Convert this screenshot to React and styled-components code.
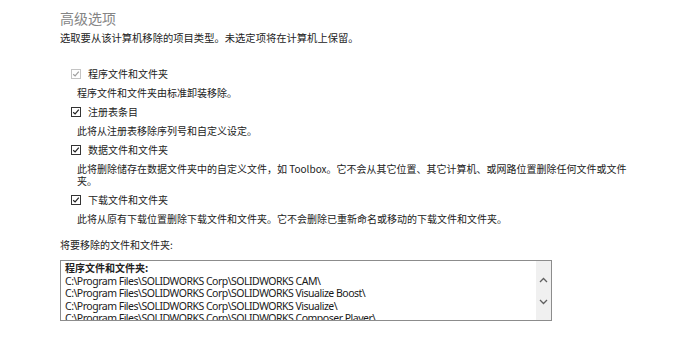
import React from 'react'
import styled, { createGlobalStyle } from 'styled-components'

const GlobalStyle = createGlobalStyle`
  html, body {
    margin: 0;
    padding: 0;
    background: #ffffff;
  }
  body {
    font-family: "Noto Sans CJK SC", "Noto Sans", sans-serif;
    color: #222222;
  }
`

const Page = styled.div`
  width: 683px;
  height: 361px;
  overflow: hidden;
  box-sizing: border-box;
  padding: 10px 0 0 60px;
`

const Title = styled.h1`
  margin: 0;
  font-size: 14px;
  line-height: 16px;
  font-weight: 400;
  color: #858585;
`

const Intro = styled.p`
  margin: 6px 0 0;
  font-size: 10.3px;
  line-height: 12px;
`

const OptionList = styled.div`
  margin-top: 23.5px;
  padding-left: 11px;
  display: flex;
  flex-direction: column;
  row-gap: 7px;
`

const Option = styled.div`
  display: flex;
  flex-direction: column;
  row-gap: 7px;
`

const Row = styled.label`
  display: flex;
  align-items: center;
  column-gap: 7px;
  font-size: 10px;
  line-height: 12px;
`

const Box = styled.span`
  width: 10px;
  height: 10px;
  box-sizing: border-box;
  border: 1px solid ${p => (p.$disabled ? '#c4c4c4' : '#333333')};
  background: #ffffff;
  display: flex;
  align-items: center;
  justify-content: center;

  svg {
    display: block;
  }
`

const Desc = styled.div`
  padding-left: 6px;
  width: 560px;
  font-size: 10px;
  line-height: 12px;
`

const ListLabel = styled.div`
  margin-top: 14.5px;
  font-size: 10px;
  line-height: 12px;
`

const ListBox = styled.div`
  margin-top: 9px;
  width: 492px;
  height: 61px;
  box-sizing: border-box;
  border: 1px solid #8c8c8c;
  display: flex;
  overflow: hidden;
`

const ListBody = styled.div`
  flex: 1;
  padding: 1px 0 0 4px;
  overflow: hidden;
`

const ListHead = styled.div`
  font-size: 10px;
  line-height: 12.5px;
  font-weight: 700;
`

const PathLine = styled.div`
  font-family: "Noto Sans", sans-serif;
  font-size: 10.5px;
  letter-spacing: -0.5px;
  line-height: 12.5px;
  white-space: nowrap;
  color: #1a1a1a;
`

const ScrollBar = styled.div`
  width: 15px;
  background: #f0f0f0;
  display: flex;
  flex-direction: column;
  align-items: center;
  padding-top: 16px;
  row-gap: 16px;
`

function Check({ disabled }) {
  return (
    <Box $disabled={disabled}>
      <svg width="8" height="8" viewBox="0 0 8 8">
        <path
          d="M1.2 4.2 L3.1 6 L6.8 1.6"
          fill="none"
          stroke={disabled ? '#a0a0a0' : '#222222'}
          strokeWidth="1.2"
        />
      </svg>
    </Box>
  )
}

function Chevron({ up }) {
  return (
    <svg width="9" height="6" viewBox="0 0 9 6">
      <path
        d={up ? 'M1 5 L4.5 1.5 L8 5' : 'M1 1 L4.5 4.5 L8 1'}
        fill="none"
        stroke="#606060"
        strokeWidth="1.3"
      />
    </svg>
  )
}

const options = [
  { label: '程序文件和文件夹', desc: '程序文件和文件夹由标准卸装移除。', disabled: true },
  { label: '注册表条目', desc: '此将从注册表移除序列号和自定义设定。' },
  {
    label: '数据文件和文件夹',
    desc: '此将删除储存在数据文件夹中的自定义文件，如 Toolbox。它不会从其它位置、其它计算机、或网路位置删除任何文件或文件夹。'
  },
  {
    label: '下载文件和文件夹',
    desc: '此将从原有下载位置删除下载文件和文件夹。它不会删除已重新命名或移动的下载文件和文件夹。'
  }
]

const paths = [
  'C:\\Program Files\\SOLIDWORKS Corp\\SOLIDWORKS CAM\\',
  'C:\\Program Files\\SOLIDWORKS Corp\\SOLIDWORKS Visualize Boost\\',
  'C:\\Program Files\\SOLIDWORKS Corp\\SOLIDWORKS Visualize\\',
  'C:\\Program Files\\SOLIDWORKS Corp\\SOLIDWORKS Composer Player\\'
]

export default function App() {
  return (
    <>
      <GlobalStyle />
      <Page>
        <Title>高级选项</Title>
        <Intro>选取要从该计算机移除的项目类型。未选定项将在计算机上保留。</Intro>

        <OptionList>
          {options.map(opt => (
            <Option key={opt.label}>
              <Row>
                <Check disabled={opt.disabled} />
                {opt.label}
              </Row>
              <Desc>{opt.desc}</Desc>
            </Option>
          ))}
        </OptionList>

        <ListLabel>将要移除的文件和文件夹:</ListLabel>
        <ListBox>
          <ListBody>
            <ListHead>程序文件和文件夹:</ListHead>
            {paths.map(p => (
              <PathLine key={p}>{p}</PathLine>
            ))}
          </ListBody>
          <ScrollBar>
            <Chevron up />
            <Chevron />
          </ScrollBar>
        </ListBox>
      </Page>
    </>
  )
}
